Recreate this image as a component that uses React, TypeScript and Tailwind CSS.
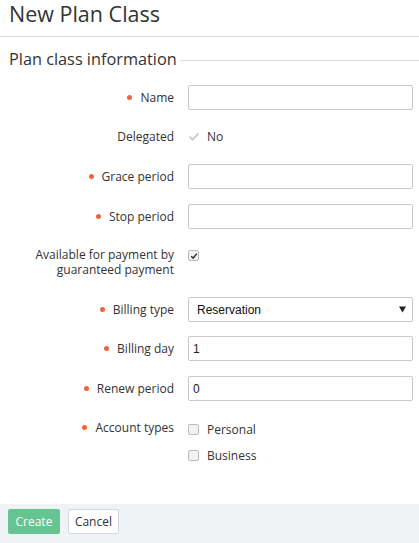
import { useState } from "react";

const font = { fontFamily: '"Open Sans", "Noto Sans", sans-serif' };

function Dot() {
  return <span className="inline-block w-[5px] h-[5px] rounded-full bg-[#f0643c] mr-[8px] mb-[2px]" />;
}

function Label({ text, required, top = "pt-[5px]" }: { text: React.ReactNode; required?: boolean; top?: string }) {
  return (
    <div className={`w-[175px] shrink-0 pr-[1px] ${top} text-right text-[12px] leading-[15px] text-[#333]`}>
      {required && <Dot />}
      {text}
    </div>
  );
}

function TextInput({ value = "" }: { value?: string }) {
  return (
    <input
      defaultValue={value}
      className="ml-[13px] h-[25px] w-[225px] rounded-[2px] border border-[#c5cad1] bg-white px-[4px] text-[12px] text-[#222] outline-none"
      style={{ fontFamily: '"Liberation Sans", Arial, sans-serif' }}
    />
  );
}

function Box({ checked }: { checked?: boolean }) {
  return (
    <span className="flex h-[11px] w-[11px] items-center justify-center rounded-[2px] border border-[#b8bcc2] bg-[#f2f2f2]">
      {checked && (
        <svg viewBox="0 0 10 10" className="h-[8px] w-[8px]">
          <path d="M1.5 5.2 L4 7.6 L8.6 2" fill="none" stroke="#333" strokeWidth="1.8" />
        </svg>
      )}
    </span>
  );
}

export default function App() {
  const [billing] = useState("Reservation");
  return (
    <div className="flex h-[543px] w-[419px] flex-col bg-white" style={font}>
      <div className="h-[37px] border-b border-[#d8dde4] px-[9px] text-[21.5px] leading-[28px] text-[#333]">
        New Plan Class
      </div>

      <div className="flex items-center pl-[9px] pt-[11px]">
        <span className="text-[16.3px] leading-[22px] text-[#333]">Plan class information</span>
        <span className="ml-[3px] mt-[2px] h-px flex-1 bg-[#d8dde4]" />
      </div>

      <div className="flex-1 pt-[15px]">
        <div className="mb-[15px] flex items-start">
          <Label text="Name" required />
          <TextInput />
        </div>

        <div className="mb-[14px] flex h-[25px] items-start">
          <Label text="Delegated" top="pt-[4px]" />
          <div className="ml-[13px] flex items-center pt-[4px] text-[12px] leading-[15px] text-[#333]">
            <svg viewBox="0 0 12 10" className="mr-[7px] h-[9px] w-[12px]">
              <path d="M1 5.2 L4.4 8.4 L11 1.6" fill="none" stroke="#c4c7cc" strokeWidth="2" />
            </svg>
            No
          </div>
        </div>

        <div className="mb-[15px] flex items-start">
          <Label text="Grace period" required />
          <TextInput />
        </div>

        <div className="mb-[15px] flex items-start">
          <Label text="Stop period" required />
          <TextInput />
        </div>

        <div className="mb-[20px] flex items-start">
          <Label text={<>Available for payment by<br />guaranteed payment</>} top="pt-[3px]" />
          <div className="ml-[13px] flex pt-[6px]">
            <Box checked />
          </div>
        </div>

        <div className="mb-[14px] flex items-start">
          <Label text="Billing type" required />
          <div
            className="ml-[13px] flex h-[25px] w-[225px] items-center justify-between rounded-[2px] border border-[#c5cad1] bg-white pl-[8px] pr-[6px] text-[12px] text-[#111]"
            style={{ fontFamily: '"Liberation Sans", Arial, sans-serif' }}
          >
            <span>{billing}</span>
            <svg viewBox="0 0 8 7" className="h-[7px] w-[7px]">
              <path d="M0 0 H8 L4 7 Z" fill="#222" />
            </svg>
          </div>
        </div>

        <div className="mb-[15px] flex items-start">
          <Label text="Billing day" required />
          <TextInput value="1" />
        </div>

        <div className="mb-[15px] flex items-start">
          <Label text="Renew period" required />
          <TextInput value="0" />
        </div>

        <div className="flex items-start">
          <Label text="Account types" required top="pt-[4px]" />
          <div className="ml-[13px] flex flex-col pt-[6px] text-[12px] leading-[15px] text-[#333]">
            <div className="flex items-center">
              <Box />
              <span className="ml-[8px]">Personal</span>
            </div>
            <div className="mt-[11px] flex items-center">
              <Box />
              <span className="ml-[8px]">Business</span>
            </div>
          </div>
        </div>
      </div>

      <div className="flex h-[39px] items-start gap-[8px] bg-[#eff3f6] pl-[8px] pt-[5px]">
        <button className="h-[25px] rounded-[2px] bg-[#66c490] px-[7.5px] text-[12px] text-white">Create</button>
        <button className="h-[25px] rounded-[2px] border border-[#d4d8dd] bg-white px-[6px] text-[12px] text-[#333]">
          Cancel
        </button>
      </div>
    </div>
  );
}
